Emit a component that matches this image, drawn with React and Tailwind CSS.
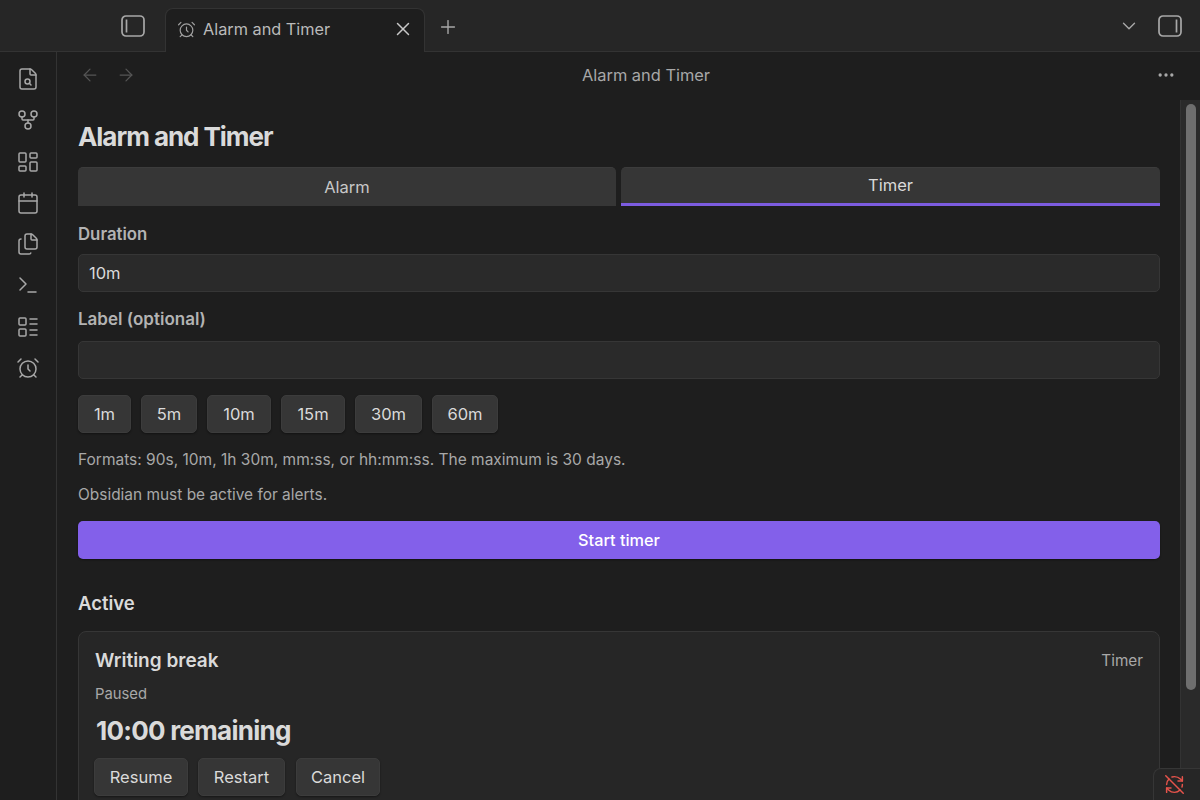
import React from "react";
import { FileSearch, GitFork, LayoutDashboard, Calendar, Files, Terminal, LayoutList, AlarmClock, X, Plus, ChevronDown, ArrowLeft, ArrowRight, Ellipsis, RefreshCwOff } from "lucide-react";

const Chip = ({ children, w }) => (
  <button className={`h-[38px] rounded-[5px] bg-[#363636] text-[#dadada] text-[16.5px] shadow-[0_1px_2px_rgba(0,0,0,0.4)] border border-[#3c3c3c] flex items-center justify-center ${w}`}>{children}</button>
);

const PanelIcon = ({ right }) => (
  <svg width="24" height="22" viewBox="0 0 24 22" fill="none" stroke="#a8a8a8" strokeWidth="1.7">
    <rect x="1" y="1" width="22" height="20" rx="4" />
    {right ? <path d="M18.5 4.5v13" /> : <path d="M5.5 4.5v13" />}
  </svg>
);

export default function App() {
  const rail = [FileSearch, GitFork, LayoutDashboard, Calendar, Files, Terminal, LayoutList, AlarmClock];
  return (
    <div className="relative w-[1200px] h-[800px] overflow-hidden bg-[#1e1e1e] flex flex-col font-['Inter','Liberation_Sans',sans-serif] text-[#dadada]">
      <div className="h-[52px] shrink-0 bg-[#262626] flex items-end border-b border-[#333333]">
        <div className="w-[121px] shrink-0" />
        <div className="h-[51px] flex items-center w-[44px] shrink-0">
          <PanelIcon />
        </div>
        <div className="relative -mb-px h-[44px] w-[260px] shrink-0 bg-[#1e1e1e] rounded-t-[8px] border border-b-0 border-[#333333] flex items-center pl-[11px] pr-[10px] pb-[3px] text-[16.3px]">
          <AlarmClock size={19} strokeWidth={1.5} className="text-[#a0a0a0] mr-[7px]" />
          <span className="flex-1 text-[#bababa]">Alarm and Timer</span>
          <X size={22} strokeWidth={1.6} className="text-[#c8c8c8]" />
        </div>
        <div className="h-[51px] flex items-center pl-[12px] pt-[2px]">
          <Plus size={22} strokeWidth={1.5} className="text-[#a8a8a8]" />
        </div>
        <div className="flex-1" />
        <div className="h-[51px] flex items-center">
          <ChevronDown size={22} strokeWidth={1.5} className="text-[#a8a8a8]" />
        </div>
        <div className="h-[51px] flex items-center pl-[18px] pr-[18px]">
          <PanelIcon right />
        </div>
      </div>
      <div className="flex flex-1 min-h-0">
        <div className="w-[57px] shrink-0 border-r border-[#333333] bg-[#1e1e1e] flex flex-col items-center pt-[15px] gap-[17.3px]">
          {rail.map((I, i) => <I key={i} size={24} strokeWidth={1.5} className="text-[#a8a8a8]" />)}
        </div>
        <div className="flex-1 min-w-0 flex flex-col">
          <div className="h-[48px] shrink-0 flex items-center pl-[23px] pr-[24px] pb-[2px]">
            <ArrowLeft size={20} strokeWidth={1.5} className="text-[#555555]" />
            <ArrowRight size={20} strokeWidth={1.5} className="text-[#555555] ml-[16px]" />
            <div className="flex-1 text-center text-[16.4px] text-[#a8a8a8]">Alarm and Timer</div>
            <Ellipsis size={20} className="text-[#a8a8a8]" />
          </div>
          <div className="flex-1 flex min-h-0">
            <div className="flex-1 min-w-0 pl-[21px] pr-[20px]">
              <h1 className="text-[26px] leading-[32px] font-bold tracking-[-1.05px] mt-[21px] text-[#dadada]">Alarm and Timer</h1>
              <div className="flex gap-[5px] mt-[14px]">
                <button className="w-[538px] h-[39px] bg-[#363636] rounded-t-[5px] border-t border-[#3c3c3c] text-[16.5px] text-[#c8c8c8]">Alarm</button>
                <button className="flex-1 h-[39px] bg-[#363636] rounded-t-[5px] border-t border-[#3c3c3c] border-b-[3px] border-b-[#7c5ce0] text-[16.5px] text-[#dadada]">Timer</button>
              </div>
              <div className="mt-[18px] text-[16.8px] leading-[20px] font-semibold text-[#b3b3b3]">Duration</div>
              <div className="mt-[10px] h-[38px] rounded-[5px] bg-[#2a2a2a] border border-[#363636] flex items-center px-[10px] pt-[1px] text-[16.5px] text-[#dadada]">10m</div>
              <div className="mt-[17px] text-[17px] leading-[20px] font-semibold text-[#b3b3b3]">Label (optional)</div>
              <div className="mt-[12px] h-[38px] rounded-[5px] bg-[#2a2a2a] border border-[#363636]" />
              <div className="flex gap-[10px] mt-[16px]">
                <Chip w="w-[53px]">1m</Chip>
                <Chip w="w-[56px]">5m</Chip>
                <Chip w="w-[64px]">10m</Chip>
                <Chip w="w-[64px]">15m</Chip>
                <Chip w="w-[67px]">30m</Chip>
                <Chip w="w-[66px]">60m</Chip>
              </div>
              <p className="mt-[17px] text-[15.5px] leading-[20px] text-[#a8a8a8]">Formats: 90s, 10m, 1h 30m, mm:ss, or hh:mm:ss. The maximum is 30 days.</p>
              <p className="mt-[15px] text-[15.45px] leading-[20px] text-[#a8a8a8]">Obsidian must be active for alerts.</p>
              <button className="mt-[16px] w-full h-[38px] rounded-[5px] bg-[#8360ea] text-white text-[16.3px] font-medium shadow-[0_1px_2px_rgba(0,0,0,0.4)]">Start timer</button>
              <h2 className="mt-[32px] text-[18.5px] leading-[24px] font-semibold text-[#dadada]">Active</h2>
              <div className="mt-[16px] h-[200px] rounded-[8px] bg-[#262626] border border-[#363636] px-[16px] pt-[16px]">
                <div className="flex justify-between items-center h-[26px]">
                  <span className="text-[19px] font-semibold text-[#dadada]">Writing break</span>
                  <span className="text-[15.3px] text-[#a8a8a8]">Timer</span>
                </div>
                <div className="mt-[11px] text-[14.8px] leading-[18px] text-[#a8a8a8]">Paused</div>
                <div className="mt-[10px] text-[26px] leading-[36px] font-bold tracking-[-0.75px] pl-[1px] text-[#dadada]">10:00 remaining</div>
                <div className="flex gap-[10px] mt-[9px] -ml-px">
                  <Chip w="w-[94px]">Resume</Chip>
                  <Chip w="w-[87px]">Restart</Chip>
                  <Chip w="w-[84px] ml-px">Cancel</Chip>
                </div>
              </div>
            </div>
            <div className="w-[20px] shrink-0 bg-[#2a2a2a] border-l border-[#333333] pl-[5px] pr-[4px] pt-[4px]">
              <div className="h-[586px] rounded-full bg-[#6e6e6e]" />
            </div>
          </div>
        </div>
      </div>
      <div className="absolute right-0 bottom-0 w-[47px] h-[32px] bg-[#262626] border-t border-l border-[#363636] rounded-tl-[8px] flex items-center justify-center pr-[5px]">
        <RefreshCwOff size={21} strokeWidth={1.7} className="text-[#e5534b]" />
      </div>
    </div>
  );
}
